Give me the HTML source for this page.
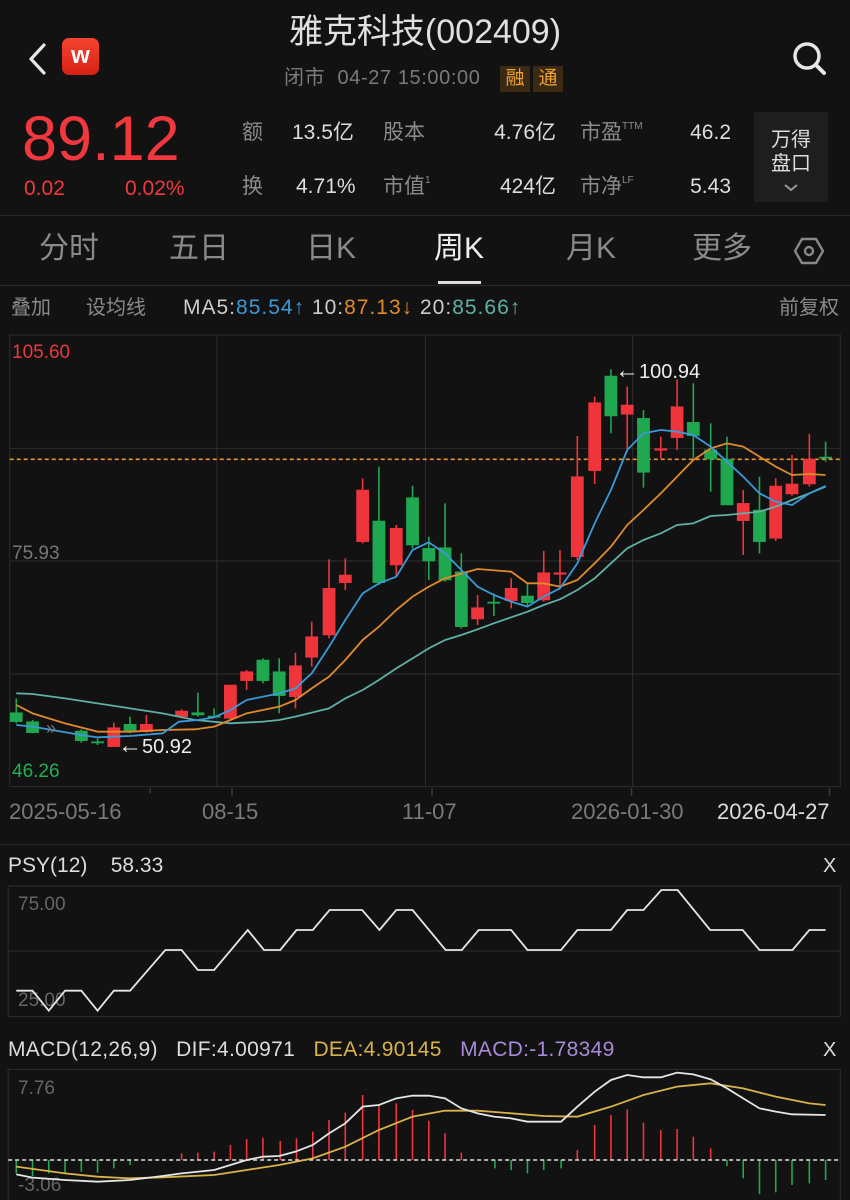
<!DOCTYPE html>
<html><head><meta charset="utf-8"><style>
*{margin:0;padding:0;box-sizing:border-box}
body{width:850px;height:1200px;background:#121212;overflow:hidden;position:relative;font-family:"Liberation Sans","Noto Sans CJK SC",sans-serif;color:#ddd}
.a{position:absolute;white-space:nowrap;line-height:1}
.g{color:#8a8a8a}
.sep{position:absolute;left:0;width:850px;height:1px;background:#2a2a2a}
</style></head><body>
<svg class="a" style="left:26px;top:42px" width="22" height="34" viewBox="0 0 22 34"><path d="M18 3 L5 17 L18 31" stroke="#e6e6e6" stroke-width="3.2" fill="none" stroke-linecap="round" stroke-linejoin="round"/></svg>
<div class="a" style="left:62px;top:38px;width:37px;height:37px;border-radius:7px;background:linear-gradient(#f5452e,#d81f14);color:#fff;font-size:24px;font-weight:bold;text-align:center;line-height:35px">w</div>
<div class="a" style="left:0;width:850px;top:15px;text-align:center;font-size:34px;color:#e0e0e0">雅克科技(002409)</div>
<div class="a g" style="left:284px;top:68px;font-size:20px;color:#7a7a7a;letter-spacing:0.6px">闭市&nbsp; 04-27 15:00:00</div>
<div class="a" style="left:500px;top:66px;width:30px;height:26px;background:#3a2a14;color:#f0a030;font-size:19px;text-align:center;line-height:25px">融</div>
<div class="a" style="left:533px;top:66px;width:30px;height:26px;background:#3a2a14;color:#f0a030;font-size:19px;text-align:center;line-height:25px">通</div>
<svg class="a" style="left:790px;top:38px" width="40" height="40" viewBox="0 0 40 40"><circle cx="17" cy="18" r="12" stroke="#e6e6e6" stroke-width="3.5" fill="none"/><path d="M26 27 L34 35" stroke="#e6e6e6" stroke-width="4" stroke-linecap="round"/></svg>

<div class="a" style="left:22px;top:108px;font-size:63px;color:#f2383f">89.12</div>
<div class="a" style="left:24px;top:178px;font-size:21px;color:#f2383f">0.02</div>
<div class="a" style="left:125px;top:178px;font-size:21px;color:#f2383f">0.02%</div>

<div class="a g" style="left:242px;top:122px;font-size:21px">额</div>
<div class="a" style="left:292px;top:122px;font-size:21px">13.5亿</div>
<div class="a g" style="left:383px;top:122px;font-size:21px">股本</div>
<div class="a" style="left:455px;width:101px;text-align:right;top:122px;font-size:21px">4.76亿</div>
<div class="a g" style="left:580px;top:122px;font-size:21px">市盈<sup style="font-size:10px;vertical-align:10px">TTM</sup></div>
<div class="a" style="left:660px;width:71px;text-align:right;top:122px;font-size:21px">46.2</div>
<div class="a g" style="left:242px;top:176px;font-size:21px">换</div>
<div class="a" style="left:296px;top:176px;font-size:21px">4.71%</div>
<div class="a g" style="left:383px;top:176px;font-size:21px">市值<sup style="font-size:10px;vertical-align:10px">1</sup></div>
<div class="a" style="left:455px;width:101px;text-align:right;top:176px;font-size:21px">424亿</div>
<div class="a g" style="left:580px;top:176px;font-size:21px">市净<sup style="font-size:10px;vertical-align:10px">LF</sup></div>
<div class="a" style="left:660px;width:71px;text-align:right;top:176px;font-size:21px">5.43</div>
<div class="a" style="left:754px;top:112px;width:74px;height:90px;background:#1e1e1e"></div>
<div class="a" style="left:754px;top:128px;width:74px;text-align:center;font-size:20px;line-height:24px;white-space:normal;color:#ddd">万得<br>盘口</div>
<svg class="a" style="left:783px;top:183px" width="16" height="10"><path d="M2 2 L8 7 L14 2" stroke="#999" stroke-width="2" fill="none"/></svg>
<div class="sep" style="top:215px"></div>

<div class="a g" style="left:39px;top:234px;font-size:30px">分时</div>
<div class="a g" style="left:169px;top:234px;font-size:30px">五日</div>
<div class="a g" style="left:306px;top:234px;font-size:30px">日K</div>
<div class="a" style="left:434px;top:234px;font-size:30px;color:#eee">周K</div>
<div class="a g" style="left:566px;top:234px;font-size:30px">月K</div>
<div class="a g" style="left:692px;top:234px;font-size:30px">更多</div>
<svg class="a" style="left:794px;top:236px" width="30" height="30" viewBox="0 0 30 30"><path d="M8 3 L22 3 L29 15 L22 27 L8 27 L1 15 Z" stroke="#888" stroke-width="2.4" fill="none"/><circle cx="15" cy="15" r="4" stroke="#888" stroke-width="2.4" fill="none"/></svg>
<div class="a" style="left:438px;top:281px;width:43px;height:3px;background:#ddd"></div>
<div class="sep" style="top:285px"></div>

<div class="a g" style="left:11px;top:298px;font-size:20px">叠加</div>
<div class="a g" style="left:86px;top:298px;font-size:20px">设均线</div>
<div class="a" style="left:183px;top:297px;font-size:21px;color:#ccc;letter-spacing:1px">MA5:<span style="color:#3a9ad9">85.54↑</span> 10:<span style="color:#e08a2c">87.13↓</span> 20:<span style="color:#5fb0a5">85.66↑</span></div>
<div class="a g" style="left:779px;top:298px;font-size:20px">前复权</div>

<svg class="a" style="left:0;top:330px" width="850" height="500" viewBox="0 0 1568 1500" preserveAspectRatio="none">
<g stroke="#2e2e2e" stroke-width="1" fill="none">
<rect x="18" y="15" width="1532" height="1355" vector-effect="non-scaling-stroke"/>
<line x1="18" y1="355" x2="1550" y2="355" vector-effect="non-scaling-stroke"/>
<line x1="18" y1="693" x2="1550" y2="693" vector-effect="non-scaling-stroke"/>
<line x1="18" y1="1032" x2="1550" y2="1032" vector-effect="non-scaling-stroke"/>
<line x1="400" y1="15" x2="400" y2="1370" vector-effect="non-scaling-stroke"/>
<line x1="785" y1="15" x2="785" y2="1370" vector-effect="non-scaling-stroke"/>
<line x1="1167" y1="15" x2="1167" y2="1370" vector-effect="non-scaling-stroke"/>
</g>
<line x1="18" y1="388" x2="1550" y2="388" stroke="#f0902a" stroke-width="1.6" stroke-dasharray="4 3" vector-effect="non-scaling-stroke"/>
<g stroke="#f0343c" stroke-width="1.6" fill="#f0343c">
<line x1="210" y1="1178" x2="210" y2="1250" vector-effect="non-scaling-stroke"/><rect x="199" y="1193" width="22" height="57"/>
<line x1="270" y1="1155" x2="270" y2="1208" vector-effect="non-scaling-stroke"/><rect x="259" y="1183" width="22" height="22"/>
<line x1="335" y1="1138" x2="335" y2="1165" vector-effect="non-scaling-stroke"/><rect x="324" y="1143" width="22" height="17"/>
<line x1="425" y1="1065" x2="425" y2="1170" vector-effect="non-scaling-stroke"/><rect x="414" y="1065" width="22" height="100"/>
<line x1="455" y1="1020" x2="455" y2="1080" vector-effect="non-scaling-stroke"/><rect x="444" y="1025" width="22" height="27"/>
<line x1="545" y1="968" x2="545" y2="1135" vector-effect="non-scaling-stroke"/><rect x="534" y="1007" width="22" height="93"/>
<line x1="575" y1="875" x2="575" y2="1010" vector-effect="non-scaling-stroke"/><rect x="564" y="920" width="22" height="62"/>
<line x1="607" y1="688" x2="607" y2="925" vector-effect="non-scaling-stroke"/><rect x="596" y="775" width="22" height="140"/>
<line x1="637" y1="685" x2="637" y2="780" vector-effect="non-scaling-stroke"/><rect x="626" y="735" width="22" height="23"/>
<line x1="669" y1="445" x2="669" y2="640" vector-effect="non-scaling-stroke"/><rect x="658" y="480" width="22" height="155"/>
<line x1="731" y1="585" x2="731" y2="740" vector-effect="non-scaling-stroke"/><rect x="720" y="595" width="22" height="110"/>
<line x1="881" y1="795" x2="881" y2="885" vector-effect="non-scaling-stroke"/><rect x="870" y="833" width="22" height="34"/>
<line x1="943" y1="745" x2="943" y2="835" vector-effect="non-scaling-stroke"/><rect x="932" y="775" width="22" height="37"/>
<line x1="1003" y1="663" x2="1003" y2="815" vector-effect="non-scaling-stroke"/><rect x="992" y="728" width="22" height="82"/>
<line x1="1033" y1="660" x2="1033" y2="770" vector-effect="non-scaling-stroke"/><rect x="1022" y="728" width="22" height="5"/>
<line x1="1065" y1="318" x2="1065" y2="690" vector-effect="non-scaling-stroke"/><rect x="1054" y="440" width="22" height="240"/>
<line x1="1097" y1="200" x2="1097" y2="462" vector-effect="non-scaling-stroke"/><rect x="1086" y="218" width="22" height="204"/>
<line x1="1157" y1="170" x2="1157" y2="360" vector-effect="non-scaling-stroke"/><rect x="1146" y="225" width="22" height="28"/>
<line x1="1219" y1="320" x2="1219" y2="385" vector-effect="non-scaling-stroke"/><rect x="1208" y="356" width="22" height="5"/>
<line x1="1249" y1="148" x2="1249" y2="360" vector-effect="non-scaling-stroke"/><rect x="1238" y="230" width="22" height="93"/>
<line x1="1371" y1="480" x2="1371" y2="675" vector-effect="non-scaling-stroke"/><rect x="1360" y="520" width="22" height="52"/>
<line x1="1431" y1="445" x2="1431" y2="633" vector-effect="non-scaling-stroke"/><rect x="1420" y="468" width="22" height="157"/>
<line x1="1461" y1="375" x2="1461" y2="497" vector-effect="non-scaling-stroke"/><rect x="1450" y="462" width="22" height="30"/>
<line x1="1493" y1="312" x2="1493" y2="470" vector-effect="non-scaling-stroke"/><rect x="1482" y="387" width="22" height="75"/>
</g>
<g stroke="#1fa84f" stroke-width="1.6" fill="#1fa84f">
<line x1="30" y1="1105" x2="30" y2="1180" vector-effect="non-scaling-stroke"/><rect x="19" y="1148" width="22" height="27"/>
<line x1="60" y1="1170" x2="60" y2="1210" vector-effect="non-scaling-stroke"/><rect x="49" y="1175" width="22" height="33"/>
<line x1="150" y1="1198" x2="150" y2="1238" vector-effect="non-scaling-stroke"/><rect x="139" y="1203" width="22" height="29"/>
<line x1="180" y1="1225" x2="180" y2="1245" vector-effect="non-scaling-stroke"/><rect x="169" y="1235" width="22" height="4"/>
<line x1="240" y1="1160" x2="240" y2="1210" vector-effect="non-scaling-stroke"/><rect x="229" y="1183" width="22" height="22"/>
<line x1="365" y1="1088" x2="365" y2="1160" vector-effect="non-scaling-stroke"/><rect x="354" y="1148" width="22" height="7"/>
<line x1="395" y1="1135" x2="395" y2="1165" vector-effect="non-scaling-stroke"/><rect x="384" y="1158" width="22" height="4"/>
<line x1="485" y1="985" x2="485" y2="1060" vector-effect="non-scaling-stroke"/><rect x="474" y="990" width="22" height="62"/>
<line x1="515" y1="985" x2="515" y2="1150" vector-effect="non-scaling-stroke"/><rect x="504" y="1025" width="22" height="72"/>
<line x1="699" y1="410" x2="699" y2="765" vector-effect="non-scaling-stroke"/><rect x="688" y="573" width="22" height="185"/>
<line x1="761" y1="467" x2="761" y2="655" vector-effect="non-scaling-stroke"/><rect x="750" y="503" width="22" height="142"/>
<line x1="791" y1="620" x2="791" y2="750" vector-effect="non-scaling-stroke"/><rect x="780" y="655" width="22" height="38"/>
<line x1="821" y1="520" x2="821" y2="755" vector-effect="non-scaling-stroke"/><rect x="810" y="653" width="22" height="97"/>
<line x1="851" y1="670" x2="851" y2="895" vector-effect="non-scaling-stroke"/><rect x="840" y="725" width="22" height="165"/>
<line x1="911" y1="790" x2="911" y2="858" vector-effect="non-scaling-stroke"/><rect x="900" y="816" width="22" height="4"/>
<line x1="973" y1="760" x2="973" y2="830" vector-effect="non-scaling-stroke"/><rect x="962" y="798" width="22" height="20"/>
<line x1="1127" y1="118" x2="1127" y2="310" vector-effect="non-scaling-stroke"/><rect x="1116" y="138" width="22" height="120"/>
<line x1="1187" y1="240" x2="1187" y2="473" vector-effect="non-scaling-stroke"/><rect x="1176" y="265" width="22" height="162"/>
<line x1="1279" y1="160" x2="1279" y2="385" vector-effect="non-scaling-stroke"/><rect x="1268" y="277" width="22" height="40"/>
<line x1="1311" y1="280" x2="1311" y2="485" vector-effect="non-scaling-stroke"/><rect x="1300" y="360" width="22" height="27"/>
<line x1="1341" y1="320" x2="1341" y2="525" vector-effect="non-scaling-stroke"/><rect x="1330" y="388" width="22" height="137"/>
<line x1="1401" y1="440" x2="1401" y2="670" vector-effect="non-scaling-stroke"/><rect x="1390" y="540" width="22" height="95"/>
<line x1="1523" y1="335" x2="1523" y2="395" vector-effect="non-scaling-stroke"/><rect x="1512" y="381" width="22" height="4"/>
</g>
<g fill="none" stroke-width="1.8" stroke-linejoin="round">
<polyline vector-effect="non-scaling-stroke" stroke="#5fb0a5" points="30,1090 60,1092 120,1105 180,1120 240,1135 300,1150 360,1170 425,1180 485,1175 515,1170 545,1160 607,1135 637,1105 669,1080 699,1050 731,1015 761,985 791,955 821,930 851,915 881,898 911,880 943,862 973,845 1003,825 1033,808 1065,780 1097,745 1127,700 1157,655 1187,630 1219,610 1249,585 1279,580 1311,558 1341,555 1371,550 1401,545 1431,530 1461,510 1493,490 1523,470"/>
<polyline vector-effect="non-scaling-stroke" stroke="#e08a2c" points="30,1125 60,1150 120,1180 180,1205 240,1205 300,1200 360,1198 395,1190 425,1170 455,1150 485,1140 515,1130 545,1110 575,1075 607,1040 637,990 669,930 699,890 731,840 761,800 791,770 821,745 881,717 943,725 973,760 1003,760 1033,770 1065,750 1097,700 1127,650 1157,585 1187,540 1219,490 1249,440 1279,390 1311,355 1341,340 1371,350 1401,380 1431,410 1461,435 1493,432 1523,435"/>
<polyline vector-effect="non-scaling-stroke" stroke="#3a9ad9" points="30,1185 60,1190 150,1215 180,1222 240,1218 300,1210 330,1175 365,1170 395,1162 425,1140 455,1110 515,1090 545,1075 575,1030 607,950 637,870 669,790 699,760 731,740 761,660 791,637 821,670 851,720 881,770 911,795 943,815 973,830 1003,800 1033,775 1065,700 1097,580 1127,480 1157,360 1187,310 1219,300 1249,305 1279,315 1311,350 1341,395 1371,440 1401,490 1431,515 1461,525 1493,490 1523,468"/>
</g>
<g stroke="#3a3a3a" stroke-width="1.5">
<line x1="277" y1="1375" x2="277" y2="1390" vector-effect="non-scaling-stroke"/><line x1="428" y1="1375" x2="428" y2="1398" vector-effect="non-scaling-stroke"/><line x1="797" y1="1375" x2="797" y2="1398" vector-effect="non-scaling-stroke"/><line x1="1165" y1="1375" x2="1165" y2="1398" vector-effect="non-scaling-stroke"/><line x1="1530" y1="1375" x2="1530" y2="1398" vector-effect="non-scaling-stroke"/>
</g>
</svg>
<div class="a" style="left:12px;top:343px;font-size:19px;color:#e8393f">105.60</div>
<div class="a" style="left:12px;top:544px;font-size:19px;color:#777">75.93</div>
<div class="a" style="left:12px;top:762px;font-size:19px;color:#22b052">46.26</div>
<div class="a" style="left:615px;top:359px;font-size:20px;color:#eee"><span style="font-size:24px">←</span>100.94</div>
<div class="a" style="left:118px;top:734px;font-size:20px;color:#eee"><span style="font-size:24px">←</span>50.92</div>
<div class="a" style="left:46px;top:719px;font-size:18px;color:#777">»</div>
<div class="a" style="left:9px;top:801px;font-size:22px;color:#7a7a7a">2025-05-16</div>
<div class="a" style="left:202px;top:801px;font-size:22px;color:#7a7a7a">08-15</div>
<div class="a" style="left:402px;top:801px;font-size:22px;color:#7a7a7a">11-07</div>
<div class="a" style="left:571px;top:801px;font-size:22px;color:#7a7a7a">2026-01-30</div>
<div class="a" style="left:717px;top:801px;font-size:22px;color:#ddd">2026-04-27</div>
<div class="sep" style="top:844px"></div>

<div class="a" style="left:8px;top:855px;font-size:21px;color:#ddd">PSY(12)&nbsp;&nbsp;&nbsp; 58.33</div>
<div class="a" style="left:823px;top:856px;font-size:20px;color:#ddd">X</div>
<div class="a" style="left:8px;top:1039px;font-size:21px;color:#ddd;letter-spacing:0.3px">MACD(12,26,9)&nbsp;&nbsp; DIF:4.00971&nbsp;&nbsp; <span style="color:#d9b24a">DEA:4.90145</span>&nbsp;&nbsp; <span style="color:#a88ad8">MACD:-1.78349</span></div>
<div class="a" style="left:823px;top:1040px;font-size:20px;color:#ddd">X</div>
<div class="a" style="left:18px;top:895px;font-size:19px;color:#666">75.00</div>
<div class="a" style="left:18px;top:991px;font-size:19px;color:#666">25.00</div>
<div class="a" style="left:18px;top:1079px;font-size:19px;color:#666">7.76</div>
<div class="a" style="left:18px;top:1176px;font-size:19px;color:#666">-3.06</div>
<svg class="a" style="left:0;top:840px" width="850" height="360" viewBox="0 0 1568 1080" preserveAspectRatio="none">
<g fill="none" stroke="#2e2e2e" stroke-width="1">
<rect x="15" y="138" width="1535" height="392" vector-effect="non-scaling-stroke"/>
<line x1="15" y1="333" x2="1550" y2="333" vector-effect="non-scaling-stroke"/>
<rect x="15" y="688" width="1535" height="400" vector-effect="non-scaling-stroke"/>
</g>
<polyline fill="none" stroke="#e6e6e6" stroke-width="1.8" vector-effect="non-scaling-stroke" points="30,452 60,452 90,512 120,452 150,452 180,512 210,452 240,452 305,330 335,330 365,390 395,390 457,270 487,330 517,330 547,270 577,270 608,210 668,210 700,270 731,210 761,210 822,330 852,330 883,270 943,270 973,330 1035,330 1065,270 1127,270 1157,210 1187,210 1220,150 1250,150 1310,270 1370,270 1401,330 1462,330 1493,270 1523,270"/>
<g stroke="#1fa84f" stroke-width="1.6">
<line x1="30" y1="960" x2="30" y2="1000" vector-effect="non-scaling-stroke"/><line x1="60" y1="960" x2="60" y2="1008" vector-effect="non-scaling-stroke"/><line x1="90" y1="960" x2="90" y2="1000" vector-effect="non-scaling-stroke"/><line x1="120" y1="960" x2="120" y2="1000" vector-effect="non-scaling-stroke"/><line x1="150" y1="960" x2="150" y2="995" vector-effect="non-scaling-stroke"/><line x1="180" y1="960" x2="180" y2="998" vector-effect="non-scaling-stroke"/><line x1="210" y1="960" x2="210" y2="985" vector-effect="non-scaling-stroke"/><line x1="240" y1="960" x2="240" y2="975" vector-effect="non-scaling-stroke"/>
<line x1="913" y1="960" x2="913" y2="985" vector-effect="non-scaling-stroke"/><line x1="943" y1="960" x2="943" y2="990" vector-effect="non-scaling-stroke"/><line x1="973" y1="960" x2="973" y2="1000" vector-effect="non-scaling-stroke"/><line x1="1003" y1="960" x2="1003" y2="990" vector-effect="non-scaling-stroke"/><line x1="1035" y1="960" x2="1035" y2="985" vector-effect="non-scaling-stroke"/>
<line x1="1341" y1="960" x2="1341" y2="978" vector-effect="non-scaling-stroke"/><line x1="1371" y1="960" x2="1371" y2="1015" vector-effect="non-scaling-stroke"/><line x1="1401" y1="960" x2="1401" y2="1062" vector-effect="non-scaling-stroke"/><line x1="1431" y1="960" x2="1431" y2="1057" vector-effect="non-scaling-stroke"/><line x1="1461" y1="960" x2="1461" y2="1035" vector-effect="non-scaling-stroke"/><line x1="1493" y1="960" x2="1493" y2="1030" vector-effect="non-scaling-stroke"/><line x1="1523" y1="960" x2="1523" y2="1020" vector-effect="non-scaling-stroke"/>
</g>
<g stroke="#f0343c" stroke-width="1.6">
<line x1="335" y1="960" x2="335" y2="940" vector-effect="non-scaling-stroke"/><line x1="365" y1="960" x2="365" y2="938" vector-effect="non-scaling-stroke"/><line x1="395" y1="960" x2="395" y2="935" vector-effect="non-scaling-stroke"/><line x1="425" y1="960" x2="425" y2="915" vector-effect="non-scaling-stroke"/><line x1="455" y1="960" x2="455" y2="897" vector-effect="non-scaling-stroke"/><line x1="485" y1="960" x2="485" y2="893" vector-effect="non-scaling-stroke"/><line x1="517" y1="960" x2="517" y2="903" vector-effect="non-scaling-stroke"/><line x1="547" y1="960" x2="547" y2="895" vector-effect="non-scaling-stroke"/><line x1="577" y1="960" x2="577" y2="875" vector-effect="non-scaling-stroke"/><line x1="607" y1="960" x2="607" y2="840" vector-effect="non-scaling-stroke"/><line x1="637" y1="960" x2="637" y2="818" vector-effect="non-scaling-stroke"/><line x1="669" y1="960" x2="669" y2="765" vector-effect="non-scaling-stroke"/><line x1="699" y1="960" x2="699" y2="797" vector-effect="non-scaling-stroke"/><line x1="731" y1="960" x2="731" y2="790" vector-effect="non-scaling-stroke"/><line x1="761" y1="960" x2="761" y2="810" vector-effect="non-scaling-stroke"/><line x1="791" y1="960" x2="791" y2="842" vector-effect="non-scaling-stroke"/><line x1="821" y1="960" x2="821" y2="880" vector-effect="non-scaling-stroke"/><line x1="851" y1="960" x2="851" y2="938" vector-effect="non-scaling-stroke"/>
<line x1="1065" y1="960" x2="1065" y2="930" vector-effect="non-scaling-stroke"/><line x1="1097" y1="960" x2="1097" y2="855" vector-effect="non-scaling-stroke"/><line x1="1127" y1="960" x2="1127" y2="825" vector-effect="non-scaling-stroke"/><line x1="1157" y1="960" x2="1157" y2="808" vector-effect="non-scaling-stroke"/><line x1="1187" y1="960" x2="1187" y2="848" vector-effect="non-scaling-stroke"/><line x1="1219" y1="960" x2="1219" y2="870" vector-effect="non-scaling-stroke"/><line x1="1249" y1="960" x2="1249" y2="867" vector-effect="non-scaling-stroke"/><line x1="1279" y1="960" x2="1279" y2="890" vector-effect="non-scaling-stroke"/><line x1="1311" y1="960" x2="1311" y2="925" vector-effect="non-scaling-stroke"/>
</g>
<line x1="15" y1="960" x2="1550" y2="960" stroke="#ddd" stroke-width="1.6" stroke-dasharray="4 3" vector-effect="non-scaling-stroke"/>
<polyline fill="none" stroke="#d9b24a" stroke-width="1.8" vector-effect="non-scaling-stroke" points="30,980 120,1000 180,1010 240,1015 300,1012 395,1005 455,990 515,975 577,955 637,920 699,870 761,830 821,812 881,812 943,820 1003,828 1065,830 1127,800 1187,765 1249,740 1311,730 1371,745 1431,770 1493,790 1523,795"/>
<polyline fill="none" stroke="#e6e6e6" stroke-width="1.8" vector-effect="non-scaling-stroke" points="30,1003 60,1013 120,1020 180,1025 240,1020 300,1008 335,1000 395,990 425,975 455,960 485,950 515,948 545,935 577,915 607,880 637,850 669,800 699,795 731,775 761,767 791,767 821,775 851,805 881,820 911,830 943,835 973,845 1003,845 1035,845 1065,800 1097,755 1127,720 1157,705 1187,712 1219,712 1249,698 1279,703 1311,718 1341,745 1371,775 1401,805 1431,815 1461,823 1523,825"/>
</svg>
</body></html>
